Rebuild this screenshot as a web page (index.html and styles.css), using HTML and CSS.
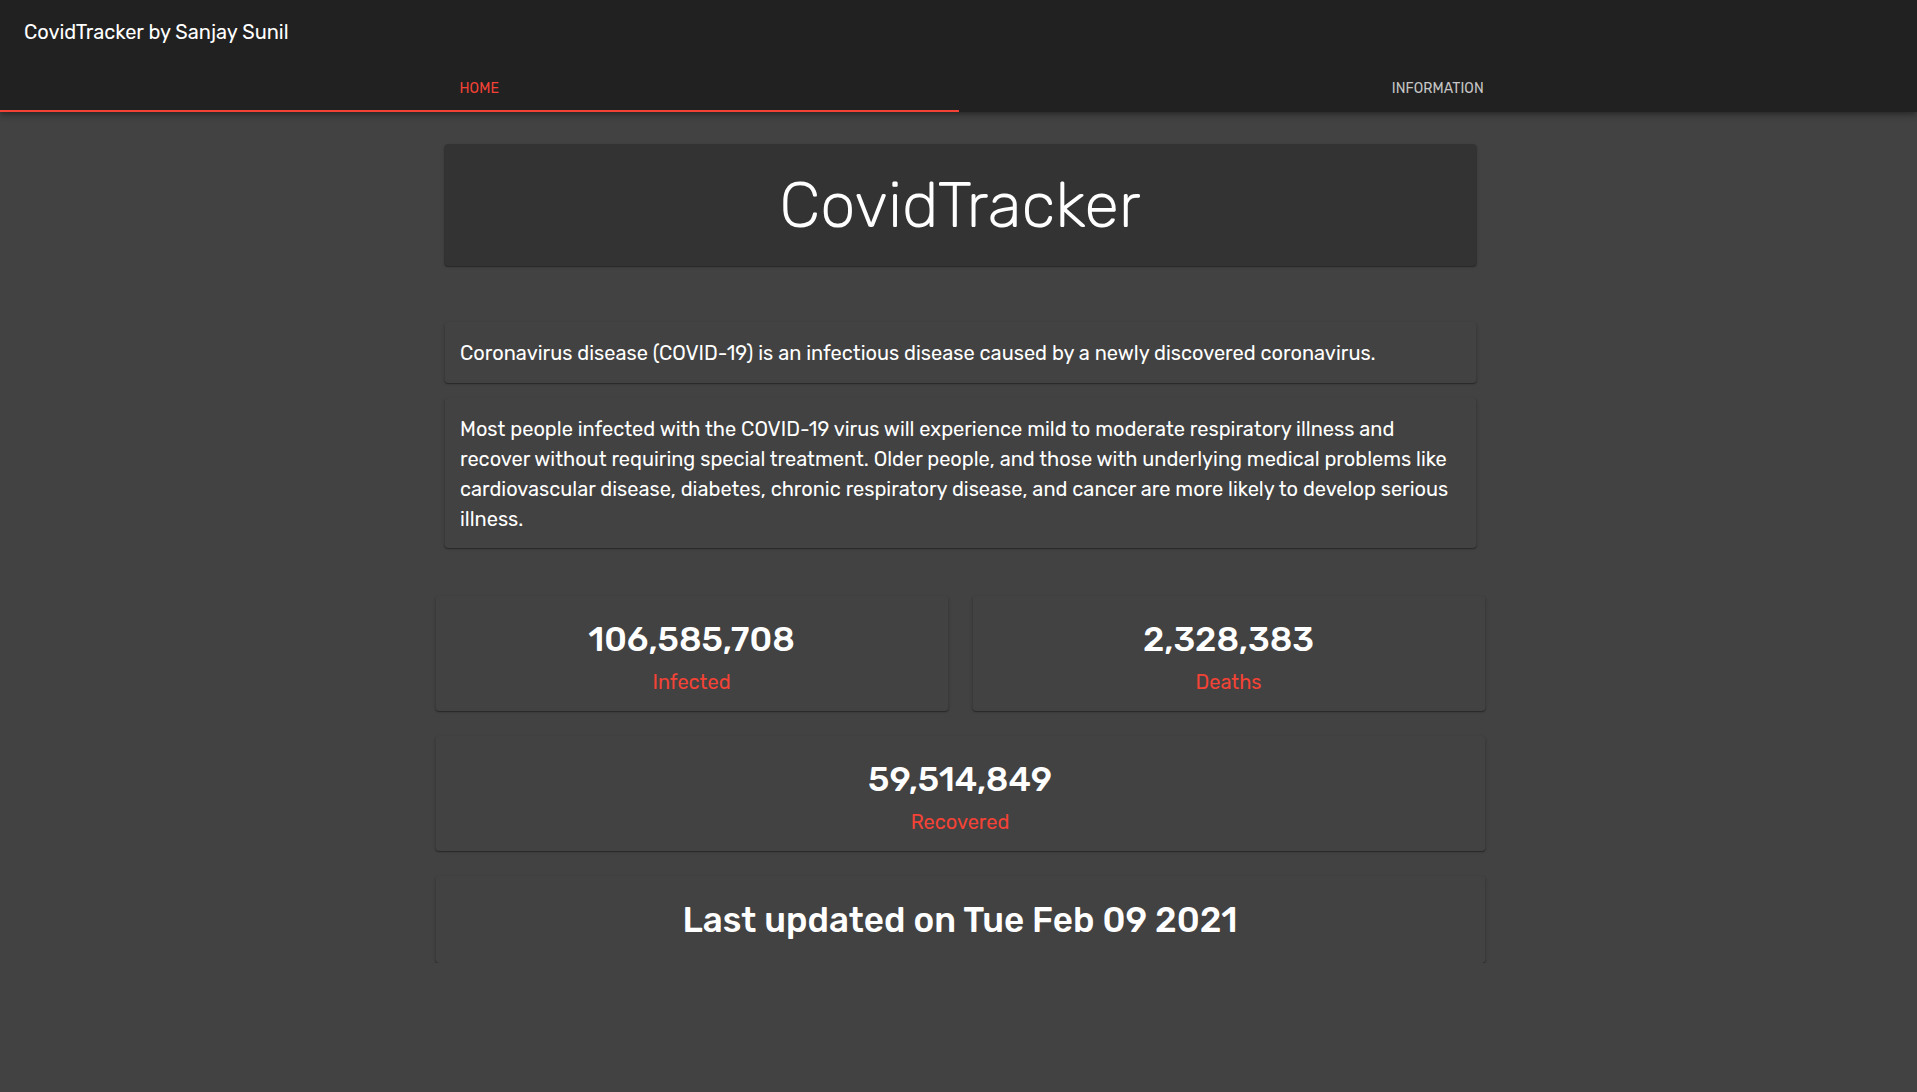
FILE: index.html
```html
<!DOCTYPE html>
<html lang="en">
<head>
<meta charset="utf-8">
<title>CovidTracker</title>
<link rel="stylesheet" href="styles.css">
</head>
<body>
<header class="appbar">
  <div class="toolbar">
    <h1 class="brand">CovidTracker by Sanjay Sunil</h1>
  </div>
  <nav class="tabs">
    <a class="tab tab-active" href="#">Home</a>
    <a class="tab" href="#">Information</a>
    <span class="indicator"></span>
  </nav>
</header>
<main class="page">
  <section class="hero card-dark">
    <h2 class="hero-title">CovidTracker</h2>
  </section>
  <section class="info">
    <div class="card info-card info-one">
      <p class="info-text">Coronavirus disease (COVID-19) is an infectious disease caused by a newly discovered coronavirus.</p>
    </div>
    <div class="card info-card info-two">
      <p class="info-text">Most people infected with the COVID-19 virus will experience mild to moderate respiratory illness and recover without requiring special treatment. Older people, and those with underlying medical problems like cardiovascular disease, diabetes, chronic respiratory disease, and cancer are more likely to develop serious illness.</p>
    </div>
  </section>
  <section class="stats">
    <div class="card stat">
      <div class="stat-num">106,585,708</div>
      <div class="stat-label">Infected</div>
    </div>
    <div class="card stat">
      <div class="stat-num">2,328,383</div>
      <div class="stat-label">Deaths</div>
    </div>
    <div class="card stat stat-wide">
      <div class="stat-num">59,514,849</div>
      <div class="stat-label">Recovered</div>
    </div>
    <div class="card updated stat-wide">
      <div class="updated-text">Last updated on Tue Feb 09 2021</div>
    </div>
  </section>
</main>
</body>
</html>
```

FILE: styles.css
```css
* { box-sizing: border-box; }

html, body {
  margin: 0;
  padding: 0;
  background: #424242;
  color: #fff;
  font-family: "Rubik", Roboto, "Noto Sans", "Liberation Sans", sans-serif;
}

.appbar {
  background: #212121;
  box-shadow: 0 2px 4px -1px rgba(0,0,0,0.2), 0 4px 5px 0 rgba(0,0,0,0.14), 0 1px 10px 0 rgba(0,0,0,0.12);
  position: relative;
  z-index: 2;
}

.toolbar {
  height: 64px;
  display: flex;
  align-items: center;
  padding: 0 24px;
}

.brand {
  margin: 0;
  font-size: 20px;
  font-weight: 400;
  letter-spacing: 0;
  color: #fff;
}

.tabs {
  display: flex;
  height: 48px;
  position: relative;
}

.tab {
  flex: 1 1 0;
  display: flex;
  align-items: center;
  justify-content: center;
  text-decoration: none;
  text-transform: uppercase;
  font-size: 14px;
  font-weight: 400;
  letter-spacing: 0.1px;
  color: rgba(255,255,255,0.75);
}

.tab-active { color: #f44336; }

.indicator {
  position: absolute;
  left: 0;
  bottom: 0;
  width: 50%;
  height: 2px;
  background: #f44336;
}

.page {
  width: 1050px;
  margin: 0 auto;
  padding-top: 32px;
  transform: translateX(1.5px);
}

.card {
  background: #424242;
  border-radius: 4px;
  box-shadow: 0 2px 1px -1px rgba(0,0,0,0.2), 0 1px 1px 0 rgba(0,0,0,0.14), 0 1px 3px 0 rgba(0,0,0,0.12);
}

.card-dark {
  background: #333333;
  border-radius: 4px;
  box-shadow: 0 2px 1px -1px rgba(0,0,0,0.2), 0 1px 1px 0 rgba(0,0,0,0.14), 0 1px 3px 0 rgba(0,0,0,0.12);
}

.hero {
  margin: 0 9px;
  height: 122px;
  display: flex;
  align-items: center;
  justify-content: center;
}

.hero-title {
  margin: 0;
  font-size: 63px;
  font-weight: 300;
  line-height: 1;
  letter-spacing: 0;
}

.info {
  margin: 56px 9px 0;
  display: flex;
  flex-direction: column;
  gap: 15px;
}

.info-card { padding: 16px 16px; }
.info-one { padding: 16px 16px 15px; }
.info-two { padding: 16px 16px 14px; }

.info-text {
  margin: 0;
  font-size: 20px;
  line-height: 30px;
  font-weight: 400;
}

.stats {
  margin-top: 48px;
  display: grid;
  grid-template-columns: 1fr 1fr;
  gap: 25px 24px;
}

.stat {
  height: 115px;
  padding: 19px 16px 13px;
  text-align: center;
}

.stat-wide { grid-column: 1 / span 2; }

.stat-num {
  font-size: 34.5px;
  font-weight: 500;
  line-height: 50px;
}

.stat-label {
  margin-top: 1px;
  font-size: 20px;
  line-height: 32px;
  color: #f44336;
}

.updated {
  height: 87px;
  display: flex;
  align-items: center;
  justify-content: center;
}

.updated-text {
  font-size: 35px;
  font-weight: 500;
  line-height: 1.2;
}
```
